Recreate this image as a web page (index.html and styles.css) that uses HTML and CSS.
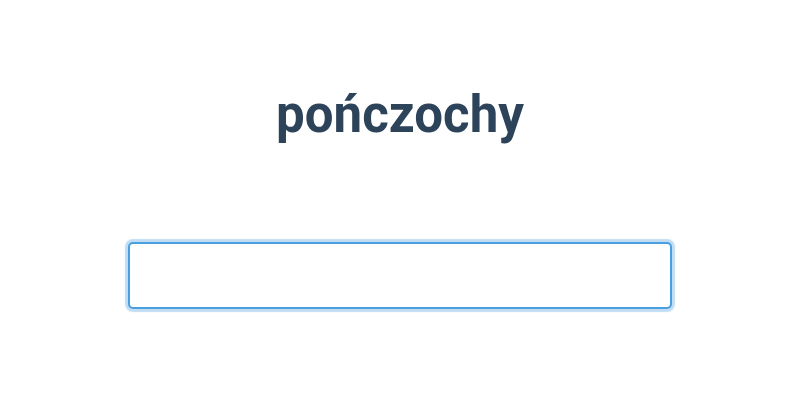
FILE: index.html
```html
<!DOCTYPE html>
<html lang="pl">
<head>
<meta charset="utf-8">
<link rel="stylesheet" href="styles.css">
</head>
<body>
<main class="page">
  <h1 class="title">pończochy</h1>
  <input class="answer" type="text" aria-label="odpowiedź">
</main>
</body>
</html>
```
FILE: styles.css
```css
html, body {
  margin: 0;
  padding: 0;
  background: #ffffff;
}
.page {
  width: 800px;
  height: 400px;
  display: flex;
  flex-direction: column;
  align-items: center;
  font-family: Roboto, "Noto Sans", sans-serif;
}
.title {
  margin: 83px 0 0 0;
  font-size: 51px;
  line-height: 64px;
  font-weight: 700;
  color: #2d4359;
}
.answer {
  margin-top: 95px;
  box-sizing: border-box;
  width: 544px;
  height: 67px;
  border: 2px solid #4a9fe0;
  border-radius: 5px;
  box-shadow: 0 0 1px 3px rgba(74, 159, 224, 0.35);
  outline: none;
  background: #fff;
  padding: 0 12px;
  font-family: Roboto, sans-serif;
  font-size: 24px;
}
```
